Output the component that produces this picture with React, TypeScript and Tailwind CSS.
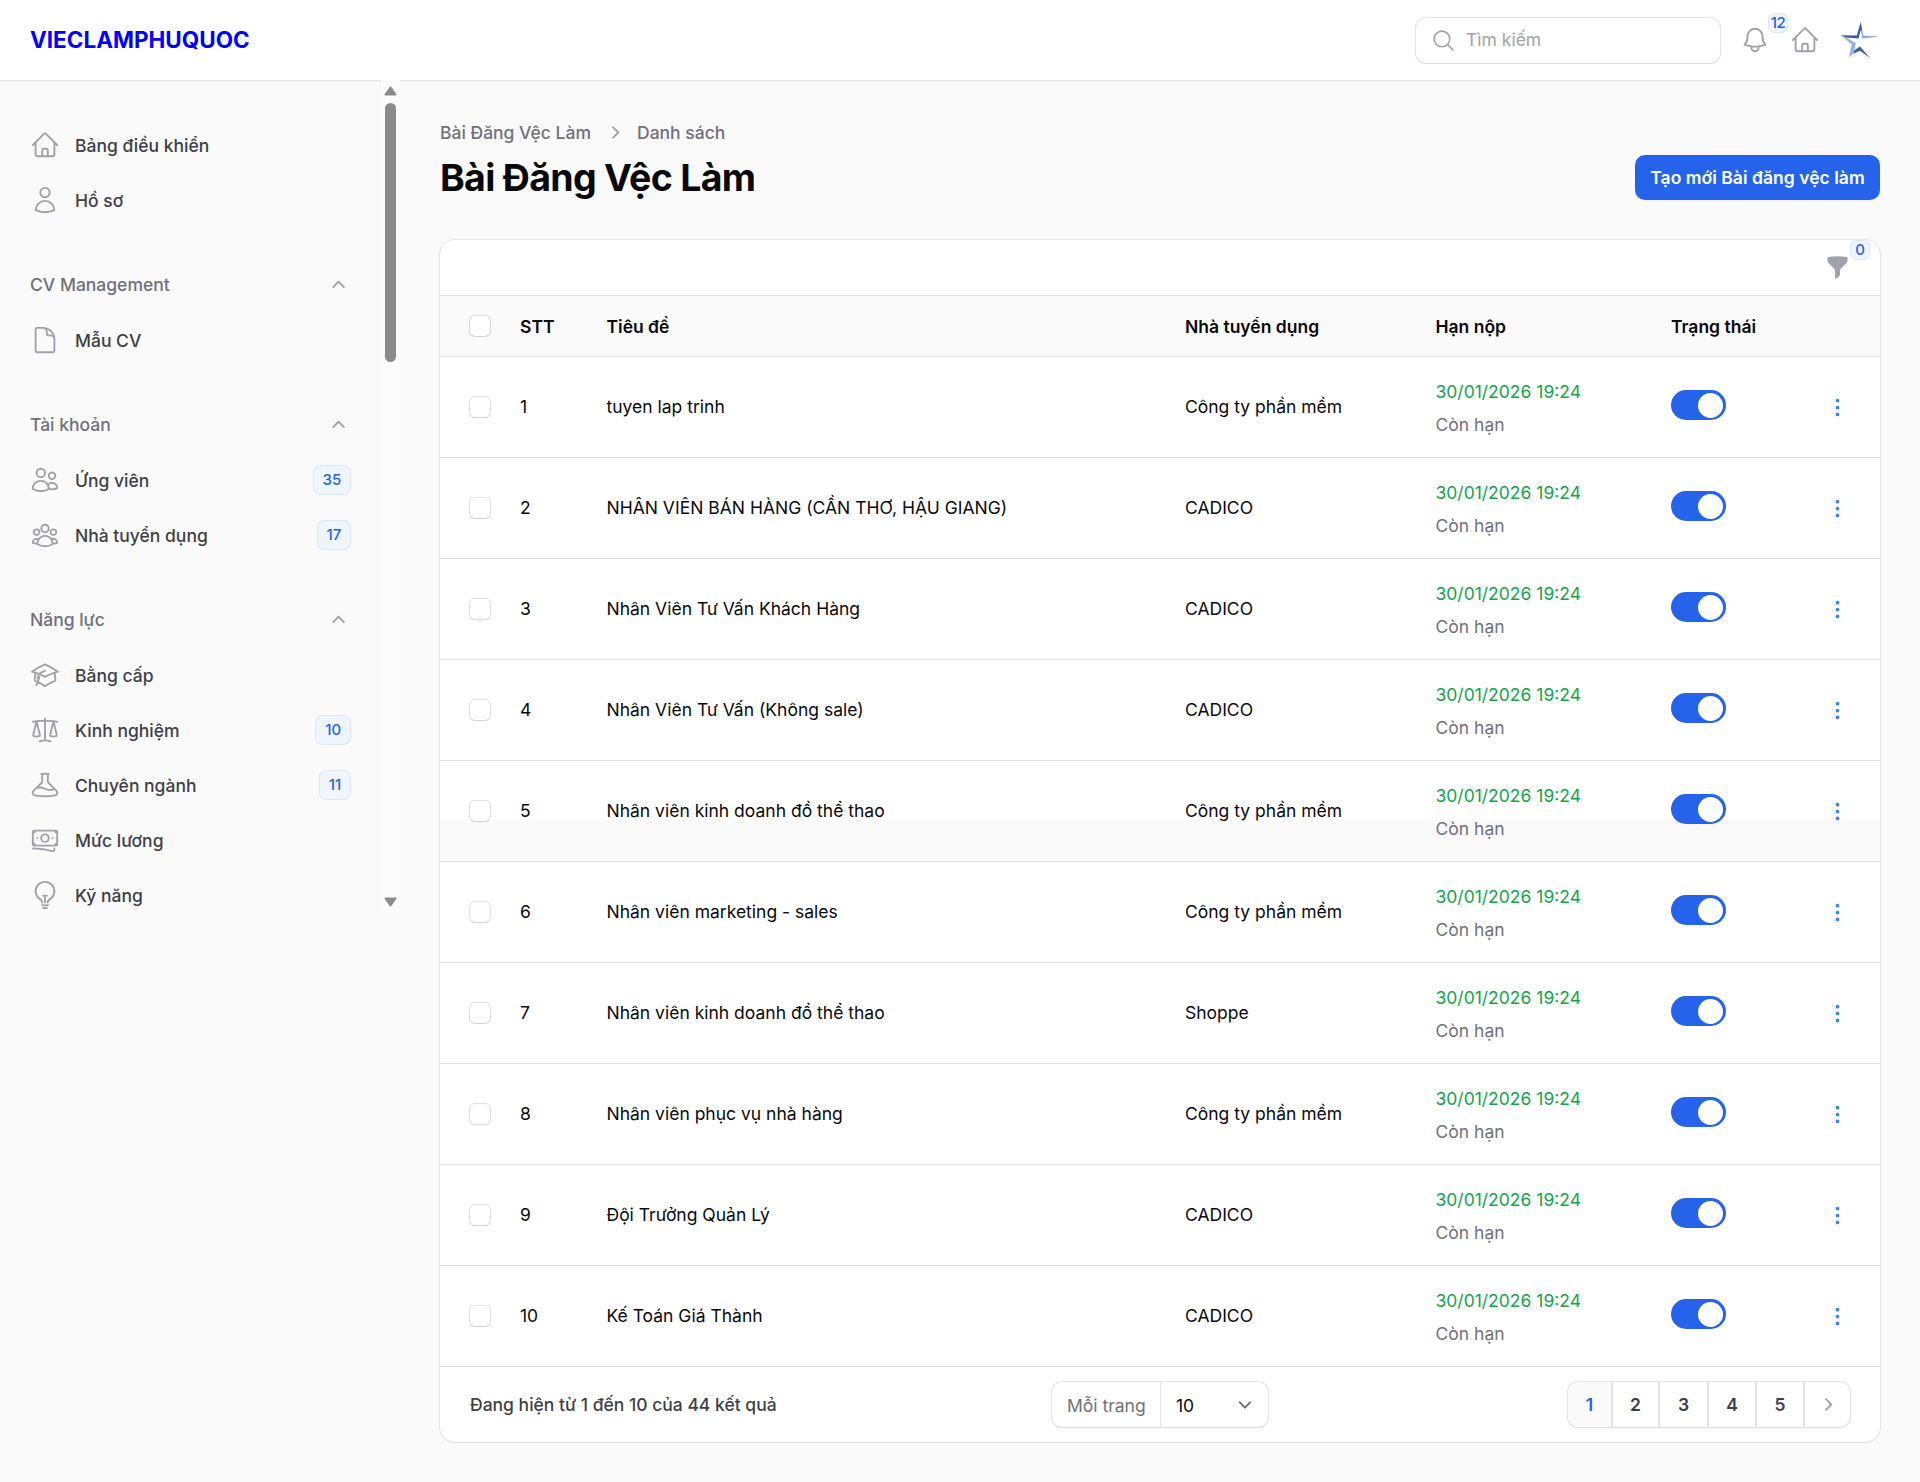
import type { ComponentType, ReactNode } from 'react';
import {
  HiMiniChevronRight,
  HiMiniChevronUp,
  HiMiniEllipsisVertical,
  HiMiniFunnel,
  HiOutlineAcademicCap,
  HiOutlineBanknotes,
  HiOutlineBeaker,
  HiOutlineBell,
  HiOutlineDocument,
  HiOutlineHome,
  HiOutlineLightBulb,
  HiOutlineMagnifyingGlass,
  HiOutlineScale,
  HiOutlineUser,
  HiOutlineUserGroup,
  HiOutlineUsers,
} from 'react-icons/hi2';

type Icon = ComponentType<{ className?: string }>;
type NavItem = { label: string; icon: Icon; badge?: number };
type NavGroup = { label?: string; items: NavItem[] };

const groups: NavGroup[] = [
  {
    items: [
      { label: 'Bảng điều khiển', icon: HiOutlineHome },
      { label: 'Hồ sơ', icon: HiOutlineUser },
    ],
  },
  { label: 'CV Management', items: [{ label: 'Mẫu CV', icon: HiOutlineDocument }] },
  {
    label: 'Tài khoản',
    items: [
      { label: 'Ứng viên', icon: HiOutlineUsers, badge: 35 },
      { label: 'Nhà tuyển dụng', icon: HiOutlineUserGroup, badge: 17 },
    ],
  },
  {
    label: 'Năng lực',
    items: [
      { label: 'Bằng cấp', icon: HiOutlineAcademicCap },
      { label: 'Kinh nghiệm', icon: HiOutlineScale, badge: 10 },
      { label: 'Chuyên ngành', icon: HiOutlineBeaker, badge: 11 },
      { label: 'Mức lương', icon: HiOutlineBanknotes },
      { label: 'Kỹ năng', icon: HiOutlineLightBulb },
    ],
  },
];

const jobs = [
  { title: 'tuyen lap trinh', employer: 'Công ty phần mềm' },
  { title: 'NHÂN VIÊN BÁN HÀNG (CẦN THƠ, HẬU GIANG)', employer: 'CADICO' },
  { title: 'Nhân Viên Tư Vấn Khách Hàng', employer: 'CADICO' },
  { title: 'Nhân Viên Tư Vấn (Không sale)', employer: 'CADICO' },
  { title: 'Nhân viên kinh doanh đồ thể thao', employer: 'Công ty phần mềm', highlighted: true },
  { title: 'Nhân viên marketing - sales', employer: 'Công ty phần mềm' },
  { title: 'Nhân viên kinh doanh đồ thể thao', employer: 'Shoppe' },
  { title: 'Nhân viên phục vụ nhà hàng', employer: 'Công ty phần mềm' },
  { title: 'Đội Trưởng Quản Lý', employer: 'CADICO' },
  { title: 'Kế Toán Giá Thành', employer: 'CADICO' },
];

function CountBadge({ className, children }: { className: string; children: ReactNode }) {
  return (
    <span
      className={`absolute flex size-5 items-center justify-center rounded-[7px] bg-blue-50 text-[15px] leading-5 font-medium tracking-tight text-[#2563eb] ring-1 ring-[#2563eb]/10 ring-inset ${className}`}
    >
      {children}
    </span>
  );
}

function StarLogo() {
  return (
    <svg viewBox="0 0 40 40" className="size-10">
      <path d="M20.700 2 23.300 15.500 39.500 16.500 22.500 18.600 20.700 10Z" fill="#8fabdc" />
      <path d="M20.700 2 22 11.500 20.700 10 18.500 18.500 6 17.500 0.700 15.300 16.800 15.500Z" fill="#3c5aa6" />
      <path d="M19.900 26.500 30.200 38 19.900 30.800 13.800 33.500 13.500 31Z" fill="#3c5aa6" />
      <path d="M0.700 15.300 11.700 24.500 9 37.200 13.900 33.300 15.800 23.300 6 17.200Z" fill="#94b2e0" />
    </svg>
  );
}

function Topbar() {
  return (
    <header className="relative flex h-20 items-center justify-between bg-white pr-10 pl-[30px] shadow-xs ring-1 ring-[#09090b]/5">
      <div className="pb-0.5 text-[22.5px] leading-[25px] font-bold text-[#0000ff]">VIECLAMPHUQUOC</div>
      <div className="flex items-center gap-5">
        <div className="flex h-[45px] w-[304px] items-center gap-2.5 rounded-[10px] bg-white pl-[15px] shadow-xs ring-1 ring-[#09090b]/10">
          <HiOutlineMagnifyingGlass className="size-[25px] text-[#a1a1aa]" />
          <span className="text-[17.5px] text-[#a1a1aa]">Tìm kiếm</span>
        </div>
        <div className="relative size-[30px]">
          <HiOutlineBell className="size-[30px] text-[#a1a1aa]" />
          <CountBadge className="-top-3 -right-[18px]">12</CountBadge>
        </div>
        <HiOutlineHome className="size-[30px] text-[#a1a1aa]" />
        <StarLogo />
      </div>
    </header>
  );
}

function Sidebar() {
  return (
    <aside className="relative z-10 flex h-[832px] w-[400px] shrink-0">
      <nav className="flex w-[381px] flex-col gap-[35px] overflow-hidden px-[30px] pt-10">
        {groups.map((group, i) => (
          <div key={i} className="flex flex-col gap-[5px]">
            {group.label && (
              <div className="flex h-[50px] items-center justify-between">
                <span className="text-[17.5px] leading-[30px] font-medium text-[#71717a]">{group.label}</span>
                <HiMiniChevronUp className="size-[25px] text-[#a1a1aa]" />
              </div>
            )}
            {group.items.map(({ label, icon: ItemIcon, badge }) => (
              <div key={label} className="flex h-[50px] shrink-0 items-center gap-[15px]">
                <ItemIcon className="size-[30px] text-[#a1a1aa]" />
                <span className="flex-1 pt-px text-[17.5px] leading-[25px] font-medium text-[#3f3f46]">{label}</span>
                {badge && (
                  <span className="min-w-[30px] rounded-[7.5px] bg-blue-50 px-[9.8px] py-[5px] text-center text-[15px] leading-5 font-medium text-[#2563eb] ring-1 ring-[#2563eb]/10 ring-inset">
                    {badge}
                  </span>
                )}
              </div>
            ))}
          </div>
        ))}
      </nav>
      <div className="flex w-[19px] flex-col items-center bg-[#fcfcfc]">
        <svg viewBox="0 0 13 10" className="mt-1.5 h-2.5 w-[13px]">
          <path d="M6.500 1.500 11.500 8.500H1.500Z" fill="#8b8b8b" stroke="#8b8b8b" strokeWidth="2" strokeLinejoin="round" />
        </svg>
        <div className="mt-[7px] h-[259px] w-[11px] rounded-full bg-[#8b8b8b]" />
        <svg viewBox="0 0 13 10" className="mt-auto mb-[5px] h-2.5 w-[13px]">
          <path d="M6.500 8.500 11.500 1.500H1.500Z" fill="#8b8b8b" stroke="#8b8b8b" strokeWidth="2" strokeLinejoin="round" />
        </svg>
      </div>
    </aside>
  );
}

function Checkbox() {
  return <span className="ml-[30px] block size-5 rounded-[5px] bg-white shadow-xs ring-1 ring-[#09090b]/12" />;
}

const columns = 'grid grid-cols-[80px_86.5px_578.5px_250.5px_235.5px_1fr_55px] items-center';

function JobTable() {
  return (
    <div className="border-t border-[#e4e4e7] text-[17.5px] text-[#09090b]">
      <div className={`${columns} h-[60px] bg-[#fafafa] font-semibold`}>
        <Checkbox />
        <span className="pt-0.5">STT</span>
        <span className="pt-0.5">Tiêu đề</span>
        <span className="pt-0.5">Nhà tuyển dụng</span>
        <span className="pt-0.5">Hạn nộp</span>
        <span className="pt-0.5">Trạng thái</span>
      </div>
      {jobs.map((job, i) => (
        <div
          key={i}
          className={`${columns} h-[101px] border-t border-[#e4e4e7] ${job.highlighted ? 'bg-linear-to-b from-white from-[59px] to-[#fafafa] to-[59px]' : ''}`}
        >
          <Checkbox />
          <span>{i + 1}</span>
          <span>{job.title}</span>
          <span>{job.employer}</span>
          <div className="flex flex-col gap-2 pt-0.5 leading-[25px]">
            <span className="text-[#16a34a]">30/01/2026 19:24</span>
            <span className="text-[#71717a]">Còn hạn</span>
          </div>
          <span className="mb-1 flex h-[30px] w-[55px] items-center justify-end rounded-full bg-[#2563eb] pr-[3px]">
            <span className="size-[25px] rounded-full bg-white" />
          </span>
          <HiMiniEllipsisVertical className="mr-[30px] size-[25px] justify-self-end text-[#3b82f6]" />
        </div>
      ))}
    </div>
  );
}

function Pagination() {
  return (
    <div className="grid h-[76px] grid-cols-[1fr_auto_1fr] items-center border-t border-[#e4e4e7] px-[30px] text-[17.5px]">
      <span className="pt-px font-medium text-[#3f3f46]">Đang hiện từ 1 đến 10 của 44 kết quả</span>
      <div className="flex h-[45px] w-[216px] items-center rounded-[10px] leading-[25px] shadow-xs ring-1 ring-[#09090b]/10">
        <span className="flex h-full w-[109px] items-center border-r border-[#e4e4e7] pt-px pl-[15px] text-[#71717a]">Mỗi trang</span>
        <span className="flex flex-1 items-center justify-between pr-2.5 pl-[15px] text-[#09090b]">
          <span className="pt-px">10</span>
          <svg viewBox="0 0 20 20" className="size-[26px]" fill="none" stroke="#6b7280" strokeWidth="1.5" strokeLinecap="round" strokeLinejoin="round">
            <path d="m6 8 4 4 4-4" />
          </svg>
        </span>
      </div>
      <div className="grid h-[45px] grid-cols-[45px_47px_49px_48px_48px_45px] justify-self-end divide-x-2 divide-[#e4e4e7] overflow-clip rounded-[10px] text-center leading-[45px] font-semibold text-[#3f3f46] shadow-xs ring-1 ring-[#09090b]/10">
        <span className="rounded-l-[10px] bg-[#fafafa] text-[#2563eb]">1</span>
        <span>2</span>
        <span>3</span>
        <span>4</span>
        <span>5</span>
        <span className="flex items-center justify-center">
          <HiMiniChevronRight className="size-[25px] text-[#a1a1aa]" />
        </span>
      </div>
    </div>
  );
}

export default function App() {
  return (
    <div className="min-h-[1482px] bg-[#fafafa] font-['Inter',sans-serif]">
      <Topbar />
      <div className="flex items-start">
        <Sidebar />
        <main className="flex-1 px-10 pt-10">
          <div className="flex items-center gap-2.5 text-[17.5px] leading-[25px] font-medium text-[#71717a]">
            <span className="w-[152px]">Bài Đăng Vệc Làm</span>
            <HiMiniChevronRight className="size-[25px] text-[#a1a1aa]" />
            <span>Danh sách</span>
          </div>
          <div className="mt-2.5 flex h-[45px] items-center justify-between">
            <h1 className="text-[37.5px] leading-[45px] font-bold tracking-[-0.7px] text-[#09090b]">Bài Đăng Vệc Làm</h1>
            <button className="h-[45px] w-[245px] rounded-[10px] bg-[#2563eb] pt-px text-[17.5px] font-semibold tracking-[0.03px] whitespace-nowrap text-white shadow-xs">
              Tạo mới Bài đăng vệc làm
            </button>
          </div>
          <section className="mt-10 rounded-[15px] bg-white shadow-xs ring-1 ring-[#09090b]/7">
            <div className="flex h-[55px] items-center justify-end pr-[30px]">
              <div className="relative size-[25px]">
                <HiMiniFunnel className="size-[25px] text-[#a1a1aa]" />
                <CountBadge className="-top-[15px] -right-5">0</CountBadge>
              </div>
            </div>
            <JobTable />
            <Pagination />
          </section>
        </main>
      </div>
    </div>
  );
}
